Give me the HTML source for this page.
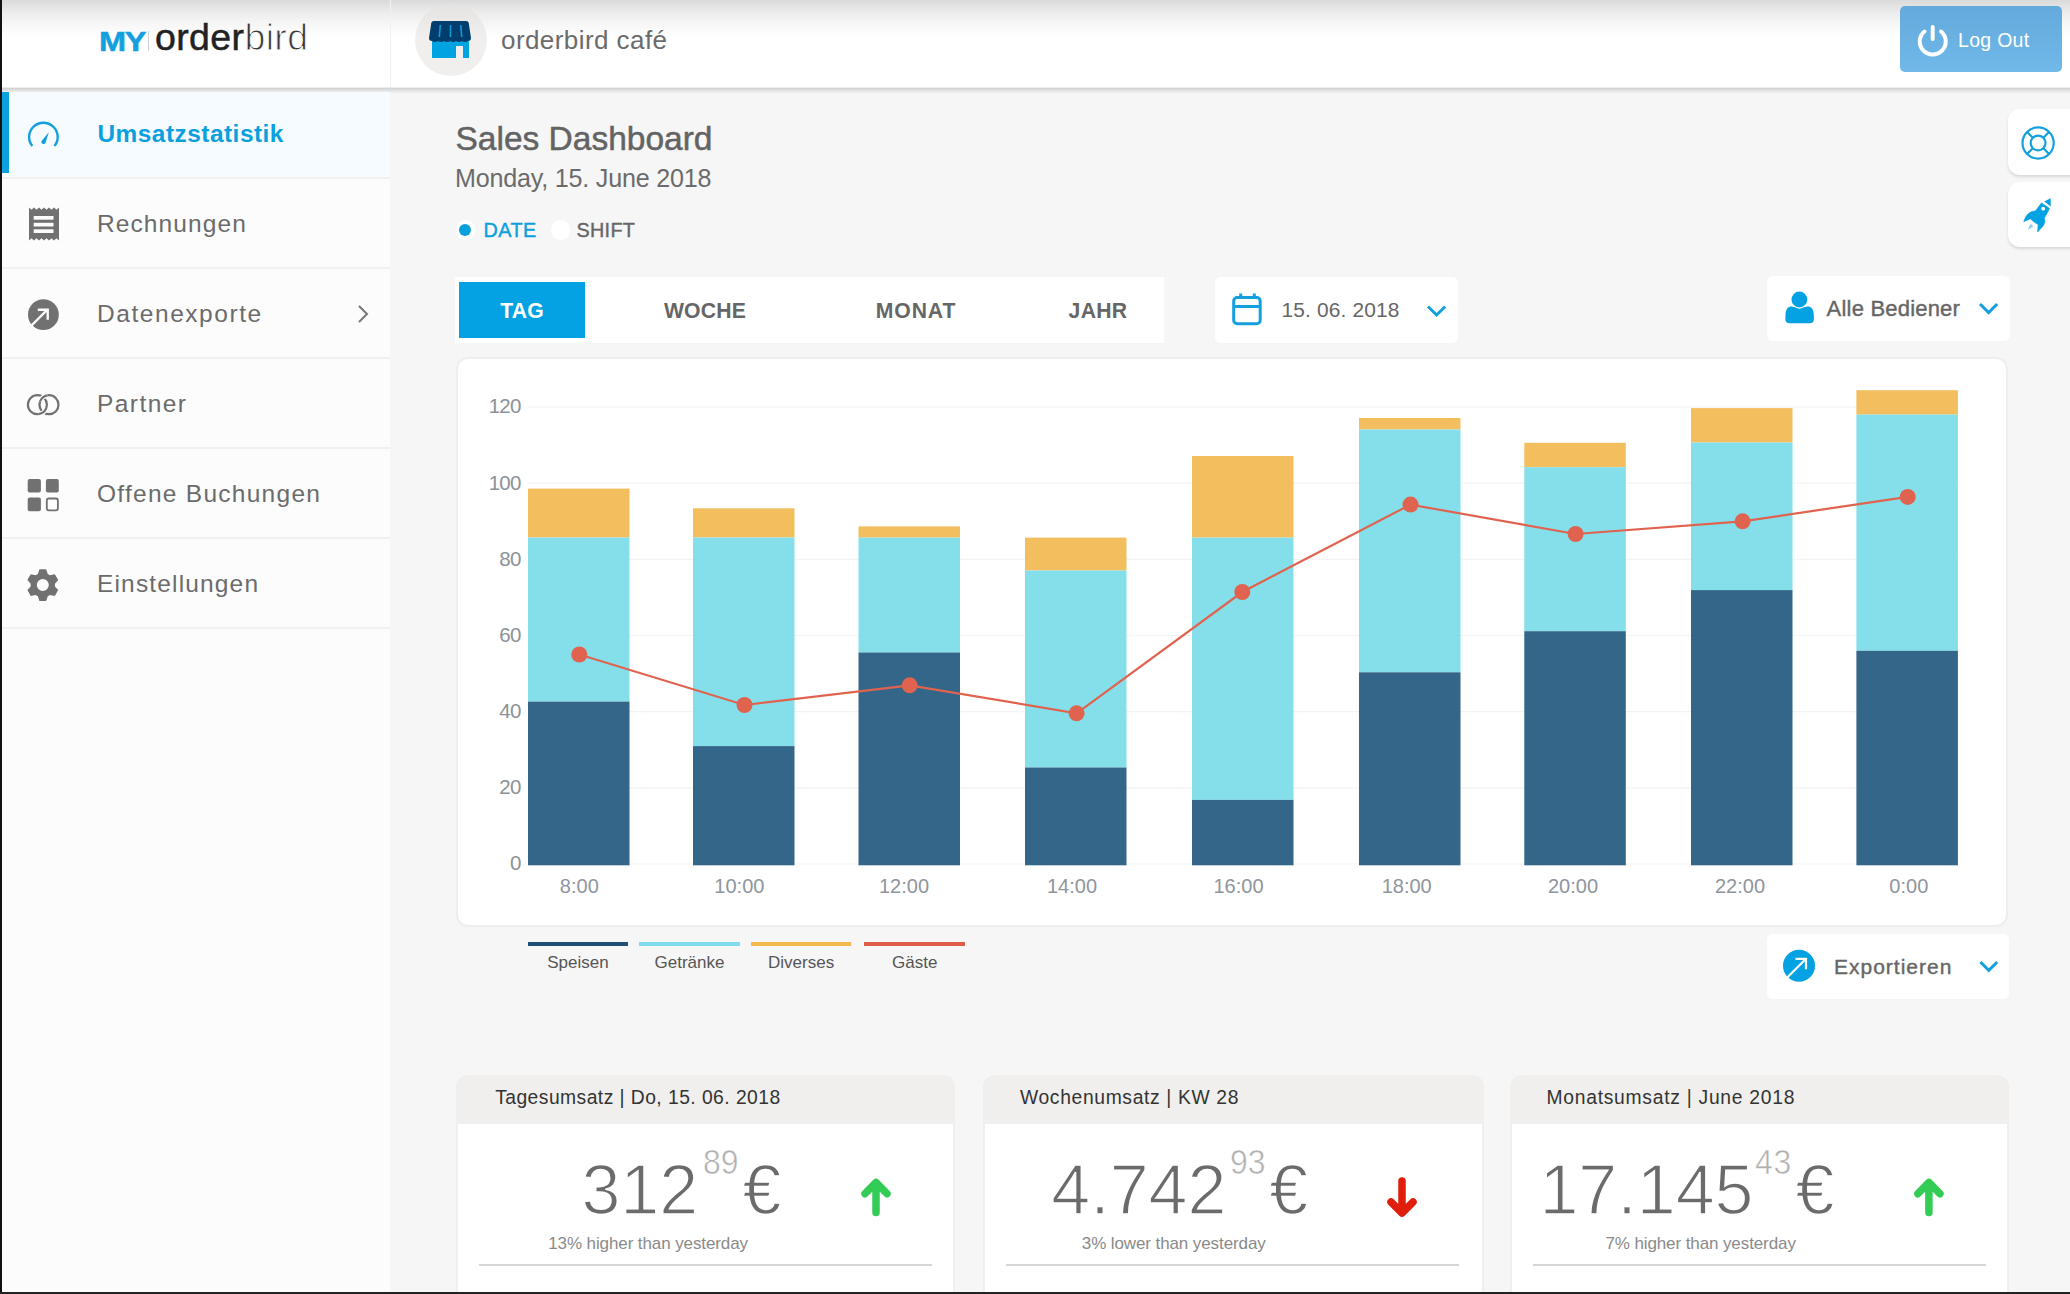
<!DOCTYPE html>
<html><head><meta charset="utf-8"><style>
*{margin:0;padding:0;box-sizing:border-box}
html,body{width:2070px;height:1294px;overflow:hidden;background:#f6f6f6;font-family:"Liberation Sans",sans-serif;position:relative}
.a{position:absolute}
.t{position:absolute;white-space:nowrap;line-height:1}
svg{position:absolute;overflow:visible}
</style></head><body>
<div class="a" style="left:0px;top:0px;width:390px;height:1294px;background:#fcfcfc;"></div>
<div class="a" style="left:0px;top:0px;width:2070px;height:88px;background:linear-gradient(#dadada 0px,#ececec 12px,#f8f8f8 26px,#fff 37px);"></div>
<div class="a" style="left:390px;top:0px;width:1px;height:88px;background:#f1f1f1;"></div>
<div class="a" style="left:0px;top:87px;width:2070px;height:1px;background:#ececec;"></div>
<div class="a" style="left:0px;top:88px;width:2070px;height:6px;background:linear-gradient(#cfcfcf,#dedede 30%,rgba(246,246,246,0));"></div>
<div class="t" style="left:98.6px;top:27.5px;font-size:27.8px;color:#14a0de;font-weight:bold;letter-spacing:-1.2px;-webkit-text-stroke:0.5px #14a0de;transform:scaleX(1.17);transform-origin:0 0;">MY</div>
<div class="a" style="left:148px;top:31px;width:1px;height:20px;background:#d0d0d0;"></div>
<div class="t" style="left:155.0px;top:19.3px;font-size:37.5px;color:#222;letter-spacing:0.37px;"><span style="-webkit-text-stroke:0.5px #222">order</span><span style="color:#3a3a3a;-webkit-text-stroke:1px #fcfcfc">bird</span></div>
<div class="a" style="left:415px;top:4px;width:72px;height:72px;background:linear-gradient(#e4e3e1,#f0efed 45%);border-radius:50%;"></div>
<svg style="left:415px;top:4px" width="72" height="72" viewBox="415 4 72 72">
<path d="M432 58 V41 H469 V58 H463 V46 H456 V58 Z" fill="#00a3e1"/>
<path d="M434 21 Q431 21 431 25 L429 38 Q429 41 432 41 Q435 43 438 41 Q441 43 444 41 Q447 43 450 41 Q453 43 456 41 Q459 43 462 41 Q465 43 468 41 Q471 41 471 38 L469 25 Q469 21 466 21 Z" fill="#013e6d"/>
<path d="M440.3 25 L439.3 37 M450.5 25 V37 M460.7 25 L461.7 37" stroke="#1496d6" stroke-width="1.6"/>
</svg>
<div class="t" style="left:501.0px;top:26.8px;font-size:26px;color:#6b6b6b;letter-spacing:0.43px;">orderbird café</div>
<div class="a" style="left:1900px;top:6px;width:162px;height:66px;background:linear-gradient(#64aadc,#70b9e9);border-radius:5px;"></div>
<svg style="left:1915px;top:22px" width="36" height="38" viewBox="1915 22 36 38">
<path d="M1924.5 31.5 A13 13 0 1 0 1941 31.5" fill="none" stroke="#fff" stroke-width="4" stroke-linecap="round"/>
<path d="M1932.7 27 V39" stroke="#fff" stroke-width="4" stroke-linecap="round"/>
</svg>
<div class="t" style="left:1958.0px;top:31.3px;font-size:19.5px;color:#fff;letter-spacing:0.3px;">Log Out</div>
<div class="a" style="left:2px;top:92px;width:388px;height:85px;background:#f5fbfe;"></div>
<div class="a" style="left:2px;top:92px;width:7px;height:81px;background:#0ca1e0;"></div>
<div class="a" style="left:2px;top:177.3px;width:388px;height:2px;background:#f1f1f0;"></div>
<div class="a" style="left:2px;top:267.3px;width:388px;height:2px;background:#f1f1f0;"></div>
<div class="a" style="left:2px;top:357.3px;width:388px;height:2px;background:#f1f1f0;"></div>
<div class="a" style="left:2px;top:447.3px;width:388px;height:2px;background:#f1f1f0;"></div>
<div class="a" style="left:2px;top:537.3px;width:388px;height:2px;background:#f1f1f0;"></div>
<div class="a" style="left:2px;top:627.3px;width:388px;height:2px;background:#f1f1f0;"></div>
<div class="t" style="left:97.5px;top:121.7px;font-size:24.4px;color:#0aa0de;font-weight:bold;letter-spacing:0.5px;">Umsatzstatistik</div>
<div class="t" style="left:97.0px;top:212.1px;font-size:24.5px;color:#6b6b6b;letter-spacing:1.1px;">Rechnungen</div>
<div class="t" style="left:97.0px;top:302.1px;font-size:24.5px;color:#6b6b6b;letter-spacing:1.55px;">Datenexporte</div>
<div class="t" style="left:97.0px;top:392.1px;font-size:24.5px;color:#6b6b6b;letter-spacing:1.44px;">Partner</div>
<div class="t" style="left:97.0px;top:482.1px;font-size:24.5px;color:#6b6b6b;letter-spacing:1.27px;">Offene Buchungen</div>
<div class="t" style="left:97.0px;top:572.1px;font-size:24.5px;color:#6b6b6b;letter-spacing:1.16px;">Einstellungen</div>
<svg style="left:355px;top:304px" width="16" height="20" viewBox="355 304 16 20">
<path d="M359 306 L367 314 L359 322" fill="none" stroke="#777" stroke-width="2"/></svg>
<svg style="left:20px;top:100px" width="50" height="520" viewBox="20 100 50 520">
<path d="M32.3 146 A14.3 14.3 0 1 1 54.5 146" fill="none" stroke="#14a0de" stroke-width="2.4"/>
<path d="M48.8 132.3 L45.4 143.3 A2.4 2.4 0 0 1 41.3 141.5 Z" fill="#0a9de0"/>
<path d="M29 207.5 l2.5 2.2 l2.5-2.2 l2.5 2.2 l2.5-2.2 l2.5 2.2 l2.5-2.2 l2.5 2.2 l2.5-2.2 l2.5 2.2 l2.5-2.2 l2.5 2.2 l2.5-2.2 V240.5 l-2.5-2.2 l-2.5 2.2 l-2.5-2.2 l-2.5 2.2 l-2.5-2.2 l-2.5 2.2 l-2.5-2.2 l-2.5 2.2 l-2.5-2.2 l-2.5 2.2 l-2.5-2.2 l-2.5 2.2 Z" fill="#717171"/>
<rect x="33.7" y="216" width="19.8" height="3.7" fill="#fcfcfc"/>
<rect x="33.7" y="222.8" width="19.8" height="3.7" fill="#fcfcfc"/>
<rect x="33.7" y="229.3" width="19.8" height="3.7" fill="#fcfcfc"/>
<circle cx="43.4" cy="314.7" r="15.4" fill="#717171"/>
<path d="M31 326 L47 310" stroke="#fcfcfc" stroke-width="2.4"/>
<path d="M37.8 309.7 H47.7 V319.8" fill="none" stroke="#fcfcfc" stroke-width="2.4"/>
<circle cx="37.4" cy="404.7" r="9.5" fill="none" stroke="#717171" stroke-width="2.2"/>
<circle cx="49" cy="404.7" r="9.5" fill="none" stroke="#717171" stroke-width="2.2"/>
<path d="M40.07 401.45 A9.5 9.5 0 0 1 47.68 395.29" fill="none" stroke="#fcfcfc" stroke-width="4.6"/><path d="M40.07 401.45 A9.5 9.5 0 0 1 47.68 395.29" fill="none" stroke="#717171" stroke-width="2.2"/>
<path d="M46.33 407.95 A9.5 9.5 0 0 1 38.72 414.11" fill="none" stroke="#fcfcfc" stroke-width="4.6"/><path d="M46.33 407.95 A9.5 9.5 0 0 1 38.72 414.11" fill="none" stroke="#717171" stroke-width="2.2"/>
<rect x="27.7" y="479.1" width="13.2" height="13.5" rx="2" fill="#717171"/>
<rect x="45.9" y="479.1" width="12.9" height="13.5" rx="2" fill="#717171"/>
<rect x="27.7" y="497.6" width="13.2" height="13.6" rx="2" fill="#717171"/>
<rect x="46.8" y="498.5" width="11.1" height="11.8" rx="2" fill="none" stroke="#717171" stroke-width="1.8"/>
</svg>
<svg style="left:20px;top:560px" width="50" height="50" viewBox="20 560 50 50">
<path d="M37.84 573.95 L39.43 569.25 L46.17 569.25 L47.76 573.95 L49.97 575.23 L54.84 574.26 L58.21 580.09 L54.93 583.82 L54.93 586.38 L58.21 590.11 L54.84 595.94 L49.97 594.97 L47.76 596.25 L46.17 600.95 L39.43 600.95 L37.84 596.25 L35.63 594.97 L30.76 595.94 L27.39 590.11 L30.67 586.38 L30.67 583.82 L27.39 580.09 L30.76 574.26 L35.63 575.23 Z M48.8 585.1 A6 6 0 1 0 36.8 585.1 A6 6 0 1 0 48.8 585.1 Z" fill="#717171" fill-rule="evenodd"/>
</svg>
<div class="t" style="left:455.5px;top:122.2px;font-size:33.5px;color:#636363;-webkit-text-stroke:0.5px #636363;">Sales Dashboard</div>
<div class="t" style="left:455.0px;top:165.9px;font-size:25.1px;color:#6b6b6b;letter-spacing:-0.2px;">Monday, 15. June 2018</div>
<div class="a" style="left:455.5px;top:220px;width:19.5px;height:19.5px;background:#fff;border-radius:50%;"></div>
<div class="a" style="left:459.3px;top:223.7px;width:12px;height:12px;background:#0aa0de;border-radius:50%;"></div>
<div class="t" style="left:483.5px;top:221.0px;font-size:19.8px;color:#0aa0de;letter-spacing:0.5px;-webkit-text-stroke:0.4px #0aa0de;">DATE</div>
<div class="a" style="left:550.8px;top:220px;width:19.5px;height:19.5px;background:#fff;border-radius:50%;"></div>
<div class="t" style="left:576.5px;top:221.0px;font-size:19.8px;color:#666;letter-spacing:0.3px;-webkit-text-stroke:0.4px #666;">SHIFT</div>
<div class="a" style="left:454.5px;top:276.7px;width:709px;height:66px;background:#fff;"></div>
<div class="a" style="left:459px;top:282px;width:125.5px;height:55.5px;background:#04a2e2;"></div>
<div class="t" style="left:221.9px;width:600px;text-align:center;top:300.3px;font-size:22.3px;color:#fff;font-weight:bold;letter-spacing:0.2px;transform:scaleX(0.95);">TAG</div>
<div class="t" style="left:404.8px;width:600px;text-align:center;top:300.3px;font-size:22.3px;color:#666;font-weight:bold;letter-spacing:0.2px;transform:scaleX(0.95);">WOCHE</div>
<div class="t" style="left:615.5px;width:600px;text-align:center;top:300.3px;font-size:22.3px;color:#666;font-weight:bold;letter-spacing:0.9px;transform:scaleX(0.95);">MONAT</div>
<div class="t" style="left:798.0px;width:600px;text-align:center;top:300.3px;font-size:22.3px;color:#666;font-weight:bold;letter-spacing:0.3px;transform:scaleX(0.95);">JAHR</div>
<div class="a" style="left:1214.5px;top:276.7px;width:243px;height:66px;background:#fff;border-radius:6px;"></div>
<svg style="left:1225px;top:285px" width="45" height="45" viewBox="1225 285 45 45">
<rect x="1233.7" y="297.5" width="26.5" height="26.2" rx="3.5" fill="none" stroke="#14a0de" stroke-width="3"/>
<path d="M1233.7 306.4 H1260.2 M1240.7 293.6 V299 M1254.3 293.6 V299" stroke="#14a0de" stroke-width="3"/>
</svg>
<div class="t" style="left:1281.5px;top:300.3px;font-size:20.9px;color:#666;letter-spacing:0.15px;">15. 06. 2018</div>
<svg style="left:1420px;top:298px" width="34" height="26" viewBox="1420 298 34 26">
<path d="M1428 306.5 L1436.6 315 L1445.2 306.5" fill="none" stroke="#14a0de" stroke-width="3"/></svg>
<div class="a" style="left:1766.8px;top:276px;width:243.4px;height:64.8px;background:#fff;border-radius:6px;"></div>
<svg style="left:1775px;top:285px" width="50" height="45" viewBox="1775 285 50 45">
<circle cx="1799.4" cy="299.5" r="7.9" fill="#04a2e2"/>
<path d="M1790 306.6 Q1793 306 1797 308 Q1799.4 309.3 1801.8 308 Q1805.8 306 1809 306.6 Q1813.9 308 1813.9 316 V319 Q1813.9 323.3 1809.6 323.3 H1789.7 Q1785.4 323.3 1785.4 319 V316 Q1785.4 308 1790 306.6 Z" fill="#04a2e2"/>
</svg>
<div class="t" style="left:1826.6px;top:297.9px;font-size:22px;color:#666;letter-spacing:0.2px;-webkit-text-stroke:0.4px #666;">Alle Bediener</div>
<svg style="left:1972px;top:296px" width="34" height="26" viewBox="1972 296 34 26">
<path d="M1980 304 L1988.6 312.6 L1997.2 304" fill="none" stroke="#14a0de" stroke-width="3"/></svg>
<div class="a" style="left:2008px;top:109.3px;width:80px;height:65.5px;background:#fff;border-radius:12px;box-shadow:0 2px 3px rgba(0,0,0,0.12);"></div>
<div class="a" style="left:2008px;top:182.2px;width:80px;height:65px;background:#fff;border-radius:12px;box-shadow:0 2px 3px rgba(0,0,0,0.12);"></div>
<svg style="left:2015px;top:120px" width="55" height="120" viewBox="2015 120 55 120">
<circle cx="2038.1" cy="143" r="15.6" fill="none" stroke="#14a0de" stroke-width="2.2"/>
<circle cx="2038.1" cy="143" r="7.4" fill="none" stroke="#14a0de" stroke-width="2.2"/>
<path d="M2032.8 137.7 L2027.1 132 M2043.4 137.7 L2049.1 132 M2032.8 148.3 L2027.1 154 M2043.4 148.3 L2049.1 154" stroke="#14a0de" stroke-width="2.2"/>
<path d="M2044.2 201.6 L2050.6 198.3 L2050.8 206.6 Z" fill="#04a2e2"/>
<path d="M2041.5 203 L2049.5 208.5 L2044.2 218.3 Q2045.8 222.5 2043 226 L2037.7 231.8 L2038.2 224.5 L2033.8 221.8 L2030.5 218.8 L2023.8 221.5 Q2026 215 2029.5 212.8 Q2032.5 211 2035.5 211 Z" fill="#04a2e2" stroke="#04a2e2" stroke-width="0.8" stroke-linejoin="round"/>
<circle cx="2043.2" cy="208.7" r="1.9" fill="#fff"/>
<path d="M2030.5 223.5 L2027.8 230 L2033.5 226.5 Z" fill="#8fd3f2"/>
</svg>
<div class="a" style="left:455.8px;top:357.2px;width:1552px;height:569.5px;background:#fff;border:2.5px solid #efeeec;border-radius:12px;"></div>
<svg style="left:0;top:0" width="2070" height="1294" viewBox="0 0 2070 1294">
<line x1="528" y1="864.0" x2="1958" y2="864.0" stroke="#f3f3f3" stroke-width="1.2"/>
<line x1="528" y1="787.9" x2="1958" y2="787.9" stroke="#f3f3f3" stroke-width="1.2"/>
<line x1="528" y1="711.7" x2="1958" y2="711.7" stroke="#f3f3f3" stroke-width="1.2"/>
<line x1="528" y1="635.5" x2="1958" y2="635.5" stroke="#f3f3f3" stroke-width="1.2"/>
<line x1="528" y1="559.4" x2="1958" y2="559.4" stroke="#f3f3f3" stroke-width="1.2"/>
<line x1="528" y1="483.2" x2="1958" y2="483.2" stroke="#f3f3f3" stroke-width="1.2"/>
<line x1="528" y1="407.1" x2="1958" y2="407.1" stroke="#f3f3f3" stroke-width="1.2"/>
<rect x="528" y="488.6" width="101.5" height="48.9" fill="#f3bf5e"/>
<rect x="528" y="537.5" width="101.5" height="164.1" fill="#85dfea"/>
<rect x="528" y="701.6" width="101.5" height="163.7" fill="#336688"/>
<rect x="693" y="508.3" width="101.5" height="29.2" fill="#f3bf5e"/>
<rect x="693" y="537.5" width="101.5" height="208.6" fill="#85dfea"/>
<rect x="693" y="746.1" width="101.5" height="119.2" fill="#336688"/>
<rect x="858.5" y="526.4" width="101.5" height="11.2" fill="#f3bf5e"/>
<rect x="858.5" y="537.6" width="101.5" height="114.9" fill="#85dfea"/>
<rect x="858.5" y="652.5" width="101.5" height="212.8" fill="#336688"/>
<rect x="1025" y="537.6" width="101.5" height="32.9" fill="#f3bf5e"/>
<rect x="1025" y="570.5" width="101.5" height="197.0" fill="#85dfea"/>
<rect x="1025" y="767.5" width="101.5" height="97.8" fill="#336688"/>
<rect x="1192" y="456" width="101.5" height="81.6" fill="#f3bf5e"/>
<rect x="1192" y="537.6" width="101.5" height="262.3" fill="#85dfea"/>
<rect x="1192" y="799.9" width="101.5" height="65.4" fill="#336688"/>
<rect x="1359" y="418" width="101.5" height="11.5" fill="#f3bf5e"/>
<rect x="1359" y="429.5" width="101.5" height="242.8" fill="#85dfea"/>
<rect x="1359" y="672.3" width="101.5" height="193.0" fill="#336688"/>
<rect x="1524.3" y="442.8" width="101.5" height="24.4" fill="#f3bf5e"/>
<rect x="1524.3" y="467.2" width="101.5" height="164.0" fill="#85dfea"/>
<rect x="1524.3" y="631.2" width="101.5" height="234.1" fill="#336688"/>
<rect x="1691" y="408.1" width="101.5" height="34.4" fill="#f3bf5e"/>
<rect x="1691" y="442.5" width="101.5" height="147.6" fill="#85dfea"/>
<rect x="1691" y="590.1" width="101.5" height="275.2" fill="#336688"/>
<rect x="1856.4" y="390.2" width="101.5" height="24.4" fill="#f3bf5e"/>
<rect x="1856.4" y="414.6" width="101.5" height="236.2" fill="#85dfea"/>
<rect x="1856.4" y="650.8" width="101.5" height="214.5" fill="#336688"/>
<polyline points="579.3,654.5 744.5,705 909.7,685.3 1076.6,713.3 1242.3,592 1410.5,504.6 1575.6,534 1742.6,521.3 1907.7,496.9" fill="none" stroke="#e0634f" stroke-width="2.2"/>
<circle cx="579.3" cy="654.5" r="8" fill="#e0634f"/>
<circle cx="744.5" cy="705" r="8" fill="#e0634f"/>
<circle cx="909.7" cy="685.3" r="8" fill="#e0634f"/>
<circle cx="1076.6" cy="713.3" r="8" fill="#e0634f"/>
<circle cx="1242.3" cy="592" r="8" fill="#e0634f"/>
<circle cx="1410.5" cy="504.6" r="8" fill="#e0634f"/>
<circle cx="1575.6" cy="534" r="8" fill="#e0634f"/>
<circle cx="1742.6" cy="521.3" r="8" fill="#e0634f"/>
<circle cx="1907.7" cy="496.9" r="8" fill="#e0634f"/>
</svg>
<div class="t" style="left:-79.5px;width:600px;text-align:right;top:853.3px;font-size:20.5px;color:#8b9299;letter-spacing:-0.8px;">0</div>
<div class="t" style="left:-79.5px;width:600px;text-align:right;top:777.2px;font-size:20.5px;color:#8b9299;letter-spacing:-0.8px;">20</div>
<div class="t" style="left:-79.5px;width:600px;text-align:right;top:701.0px;font-size:20.5px;color:#8b9299;letter-spacing:-0.8px;">40</div>
<div class="t" style="left:-79.5px;width:600px;text-align:right;top:624.9px;font-size:20.5px;color:#8b9299;letter-spacing:-0.8px;">60</div>
<div class="t" style="left:-79.5px;width:600px;text-align:right;top:548.7px;font-size:20.5px;color:#8b9299;letter-spacing:-0.8px;">80</div>
<div class="t" style="left:-79.5px;width:600px;text-align:right;top:472.6px;font-size:20.5px;color:#8b9299;letter-spacing:-0.8px;">100</div>
<div class="t" style="left:-79.5px;width:600px;text-align:right;top:396.4px;font-size:20.5px;color:#8b9299;letter-spacing:-0.8px;">120</div>
<div class="t" style="left:279.3px;width:600px;text-align:center;top:875.6px;font-size:20px;color:#8f959d;">8:00</div>
<div class="t" style="left:439.4px;width:600px;text-align:center;top:875.6px;font-size:20px;color:#8f959d;">10:00</div>
<div class="t" style="left:604.0px;width:600px;text-align:center;top:875.6px;font-size:20px;color:#8f959d;">12:00</div>
<div class="t" style="left:772.0px;width:600px;text-align:center;top:875.6px;font-size:20px;color:#8f959d;">14:00</div>
<div class="t" style="left:938.5px;width:600px;text-align:center;top:875.6px;font-size:20px;color:#8f959d;">16:00</div>
<div class="t" style="left:1106.7px;width:600px;text-align:center;top:875.6px;font-size:20px;color:#8f959d;">18:00</div>
<div class="t" style="left:1273.0px;width:600px;text-align:center;top:875.6px;font-size:20px;color:#8f959d;">20:00</div>
<div class="t" style="left:1440.0px;width:600px;text-align:center;top:875.6px;font-size:20px;color:#8f959d;">22:00</div>
<div class="t" style="left:1608.8px;width:600px;text-align:center;top:875.6px;font-size:20px;color:#8f959d;">0:00</div>
<div class="a" style="left:527.7px;top:941.5px;width:100.39999999999998px;height:4.5px;background:#1f4f78;"></div>
<div class="t" style="left:277.9px;width:600px;text-align:center;top:954.3px;font-size:17px;color:#555;">Speisen</div>
<div class="a" style="left:639.3px;top:941.5px;width:100.40000000000009px;height:4.5px;background:#7fdcea;"></div>
<div class="t" style="left:389.5px;width:600px;text-align:center;top:954.3px;font-size:17px;color:#555;">Getränke</div>
<div class="a" style="left:750.9px;top:941.5px;width:100.5px;height:4.5px;background:#f5ba4f;"></div>
<div class="t" style="left:501.1px;width:600px;text-align:center;top:954.3px;font-size:17px;color:#555;">Diverses</div>
<div class="a" style="left:864.1px;top:941.5px;width:101.10000000000002px;height:4.5px;background:#e05a48;"></div>
<div class="t" style="left:614.7px;width:600px;text-align:center;top:954.3px;font-size:17px;color:#555;">Gäste</div>
<div class="a" style="left:1767.1px;top:933.5px;width:242.3px;height:65.3px;background:#fff;border-radius:6px;"></div>
<svg style="left:1780px;top:945px" width="40" height="40" viewBox="1780 945 40 40">
<circle cx="1799" cy="965.8" r="16" fill="#04a2e2"/>
<path d="M1787.5 977.3 L1806 958.8" stroke="#fff" stroke-width="2.2"/>
<path d="M1795.5 958.8 H1806 V969.3" fill="none" stroke="#fff" stroke-width="2.2"/>
</svg>
<div class="t" style="left:1834.0px;top:956.3px;font-size:21px;color:#666;letter-spacing:1.0px;-webkit-text-stroke:0.4px #666;">Exportieren</div>
<svg style="left:1972px;top:953px" width="34" height="26" viewBox="1972 953 34 26">
<path d="M1980.4 962 L1988.8 970.4 L1997.2 962" fill="none" stroke="#14a0de" stroke-width="3"/></svg>
<div class="a" style="left:456.2px;top:1075px;width:499.2px;height:260px;background:#fff;border:2.5px solid #f0efed;border-top:none;border-radius:12px 12px 0 0;"></div>
<div class="a" style="left:456.2px;top:1075px;width:499.2px;height:48.6px;background:#f0efed;border-radius:12px 12px 0 0;"></div>
<div class="t" style="left:495.2px;top:1087.5px;font-size:19.3px;color:#333;letter-spacing:0.45px;">Tagesumsatz | Do, 15. 06. 2018</div>
<div class="t" style="left:581.4px;top:1154.9px;font-size:70px;color:#6b6b6b;-webkit-text-stroke:1.5px #fff;">312</div>
<div class="t" style="left:702.8px;top:1144.9px;font-size:35.5px;color:#b0b0b0;transform:scaleX(0.9);transform-origin:0 0;-webkit-text-stroke:0.6px #fff;">89</div>
<div class="t" style="left:742.5px;top:1154.9px;font-size:70px;color:#6b6b6b;-webkit-text-stroke:1.5px #fff;">€</div>
<div class="t" style="left:548.2px;top:1235.0px;font-size:17px;color:#8a8a8a;letter-spacing:-0.1px;">13% higher than yesterday</div>
<div class="a" style="left:479.2px;top:1264px;width:453.2px;height:2px;background:#d6d6d6;"></div>
<svg style="left:0;top:0" width="2070" height="1294" viewBox="0 0 2070 1294"><path d="M876.0 1212.6 V1183 M865.0 1193.7 L876.0 1182.5 L887.0 1193.7" fill="none" stroke="#33cc55" stroke-width="7.5" stroke-linecap="round" stroke-linejoin="round"/></svg>
<div class="a" style="left:983px;top:1075px;width:500.5px;height:260px;background:#fff;border:2.5px solid #f0efed;border-top:none;border-radius:12px 12px 0 0;"></div>
<div class="a" style="left:983px;top:1075px;width:500.5px;height:48.6px;background:#f0efed;border-radius:12px 12px 0 0;"></div>
<div class="t" style="left:1020.0px;top:1087.5px;font-size:19.3px;color:#333;letter-spacing:0.65px;">Wochenumsatz | KW 28</div>
<div class="t" style="left:1051.3px;top:1154.9px;font-size:70px;color:#6b6b6b;-webkit-text-stroke:1.5px #fff;">4.742</div>
<div class="t" style="left:1229.6px;top:1144.9px;font-size:35.5px;color:#b0b0b0;transform:scaleX(0.9);transform-origin:0 0;-webkit-text-stroke:0.6px #fff;">93</div>
<div class="t" style="left:1269.3px;top:1154.9px;font-size:70px;color:#6b6b6b;-webkit-text-stroke:1.5px #fff;">€</div>
<div class="t" style="left:1081.8px;top:1235.0px;font-size:17px;color:#8a8a8a;letter-spacing:-0.1px;">3% lower than yesterday</div>
<div class="a" style="left:1006px;top:1264px;width:453.20000000000005px;height:2px;background:#d6d6d6;"></div>
<svg style="left:0;top:0" width="2070" height="1294" viewBox="0 0 2070 1294"><path d="M1402.0 1181 V1212.5 M1391.0 1202 L1402.0 1213 L1413.0 1202" fill="none" stroke="#e01e0b" stroke-width="7.5" stroke-linecap="round" stroke-linejoin="round"/></svg>
<div class="a" style="left:1509.6px;top:1075px;width:499.8000000000002px;height:260px;background:#fff;border:2.5px solid #f0efed;border-top:none;border-radius:12px 12px 0 0;"></div>
<div class="a" style="left:1509.6px;top:1075px;width:499.8000000000002px;height:48.6px;background:#f0efed;border-radius:12px 12px 0 0;"></div>
<div class="t" style="left:1546.5px;top:1087.5px;font-size:19.3px;color:#333;letter-spacing:0.73px;">Monatsumsatz | June 2018</div>
<div class="t" style="left:1539.4px;top:1154.9px;font-size:70px;color:#6b6b6b;-webkit-text-stroke:1.5px #fff;">17.145</div>
<div class="t" style="left:1754.5px;top:1144.9px;font-size:35.5px;color:#b0b0b0;letter-spacing:0.8px;transform:scaleX(0.9);transform-origin:0 0;-webkit-text-stroke:0.6px #fff;">43</div>
<div class="t" style="left:1795.5px;top:1154.9px;font-size:70px;color:#6b6b6b;-webkit-text-stroke:1.5px #fff;">€</div>
<div class="t" style="left:1605.4px;top:1235.0px;font-size:17px;color:#8a8a8a;letter-spacing:-0.1px;">7% higher than yesterday</div>
<div class="a" style="left:1532.5px;top:1264px;width:453.5px;height:2px;background:#d6d6d6;"></div>
<svg style="left:0;top:0" width="2070" height="1294" viewBox="0 0 2070 1294"><path d="M1928.9 1212.6 V1183 M1917.9 1193.7 L1928.9 1182.5 L1939.9 1193.7" fill="none" stroke="#33cc55" stroke-width="7.5" stroke-linecap="round" stroke-linejoin="round"/></svg>
<div class="a" style="left:0px;top:0px;width:2px;height:1294px;background:#111;"></div>
<div class="a" style="left:0px;top:1292px;width:2070px;height:2px;background:#222;"></div>
</body></html>
